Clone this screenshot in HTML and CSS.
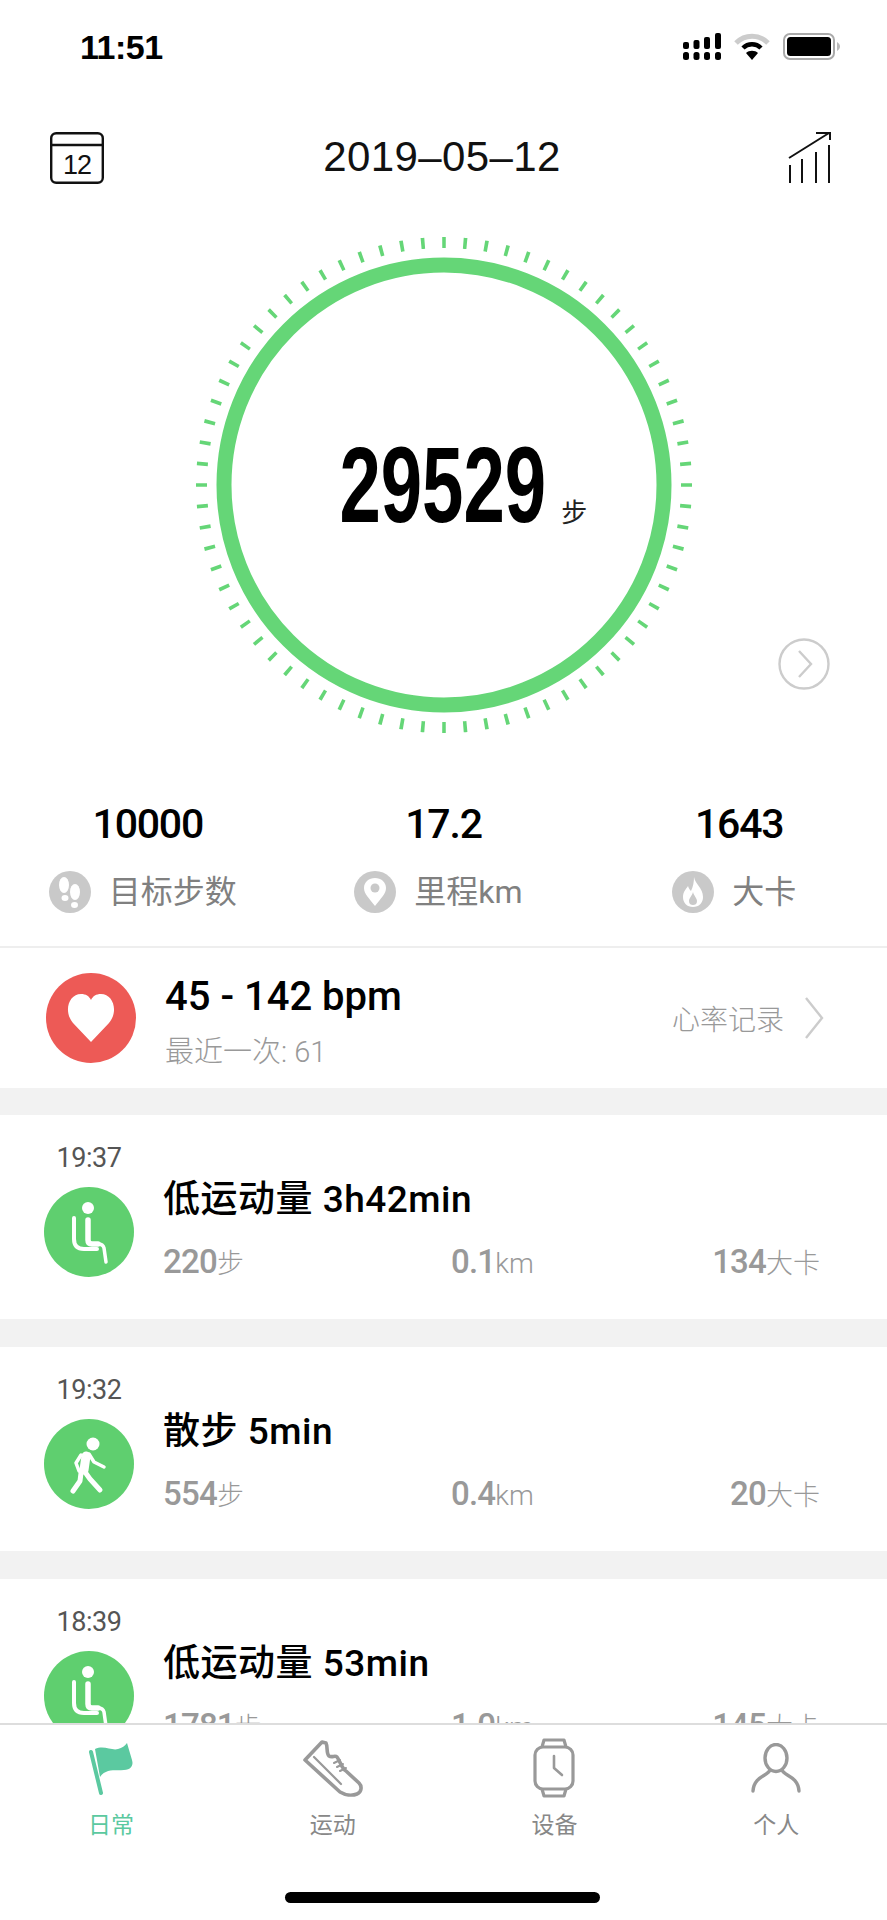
FILE: index.html
```html
<!DOCTYPE html>
<html lang="zh-CN">
<head>
    <meta charset="UTF-8">
    <meta name="viewport" content="width=device-width, initial-scale=1.0">
    <title>日常</title>
    <link rel="stylesheet" href="styles.css">
</head>
<body>
    <div class="phone">
        <div class="statusbar">
            <span class="clock">11:51</span>
            <div class="status-icons">
                <svg class="ic-signal" width="38" height="27" viewBox="0 0 38 27">
                    <g fill="#000">
                        <rect x="0" y="9" width="6" height="7" rx="2"/><rect x="0" y="19" width="6" height="8" rx="2.5"/>
                        <rect x="10.5" y="7" width="6" height="9" rx="2"/><rect x="10.5" y="19" width="6" height="8" rx="2.5"/>
                        <rect x="21" y="4" width="6" height="12" rx="2"/><rect x="21" y="19" width="6" height="8" rx="2.5"/>
                        <rect x="32" y="0" width="6" height="16" rx="2"/><rect x="32" y="19" width="6" height="8" rx="2.5"/>
                    </g>
                </svg>
                <svg class="ic-wifi" width="36" height="27" viewBox="0 0 36 27">
                    <path d="M2 10 C11 1 25 1 34 10" fill="none" stroke="#ccc" stroke-width="5"/>
                    <path d="M9 15 C14 10 22 10 27 15" fill="none" stroke="#000" stroke-width="4.5"/>
                    <path d="M18 27 L12 20 C15 17 21 17 24 20 Z" fill="#000"/>
                </svg>
                <svg class="ic-battery" width="57" height="27" viewBox="0 0 57 27">
                    <rect x="1" y="1" width="50" height="25" rx="6" fill="none" stroke="#aaa" stroke-width="2"/>
                    <rect x="4" y="4" width="44" height="19" rx="3.5" fill="#000"/>
                    <path d="M54 9 C56 10 57 12 57 13.5 C57 15 56 17 54 18 Z" fill="#bbb"/>
                </svg>
            </div>
        </div>

        <div class="topbar">
            <svg width="54" height="52" viewBox="0 0 54 52">
                <rect x="1.2" y="1.2" width="51.6" height="49.6" rx="5" fill="none" stroke="#111" stroke-width="2.4"/>
                <path d="M1 13 H53" stroke="#111" stroke-width="2.4"/>
                <text x="27" y="42" text-anchor="middle" class="cal-day">12</text>
            </svg>
            <span class="date">2019–05–12</span>
            <svg width="44" height="54" viewBox="0 0 44 54">
                <path d="M2 34 V52 M14 28 V52 M28 21 V52 M41 14 V52" fill="none" stroke="#111" stroke-width="2"/>
                <path d="M1 27 L41 2 M28 2 H42 V9" fill="none" stroke="#111" stroke-width="2"/>
            </svg>
        </div>

        <div class="ring-area">
            <div class="ring">
                <svg class="ring-svg" width="500" height="500" viewBox="0 0 500 500">
                    <circle class="ring-ticks" cx="250" cy="250" r="242.5" pathLength="72" transform="rotate(-90 250 250)"/>
                    <circle class="ring-main" cx="250" cy="250" r="220"/>
                </svg>
                <div class="steps"><span class="steps-num">29529</span><span class="steps-unit">步</span></div>
            </div>
            <svg class="ring-next" width="52" height="52" viewBox="0 0 52 52">
                <circle cx="26" cy="26" r="24.5" fill="none" stroke="#ccc" stroke-width="2.4"/>
                <path d="M21 13 L33 26 L21 39" fill="none" stroke="#ccc" stroke-width="2.4"/>
            </svg>
        </div>

        <div class="stats">
            <div class="stat">
                <div class="stat-num">10000</div>
                <div class="stat-label">
                    <svg width="42" height="42" viewBox="0 0 42 42">
                        <circle cx="21" cy="21" r="21" fill="#c9c9c9"/>
                        <g fill="#fff">
                            <ellipse cx="15" cy="14" rx="5" ry="8"/><ellipse cx="16" cy="27" rx="3.5" ry="3"/>
                            <ellipse cx="26" cy="21" rx="5" ry="8"/><ellipse cx="25.5" cy="34" rx="3.5" ry="3"/>
                        </g>
                    </svg>
                    <span>目标步数</span>
                </div>
            </div>
            <div class="stat">
                <div class="stat-num">17.2</div>
                <div class="stat-label">
                    <svg width="42" height="42" viewBox="0 0 42 42">
                        <circle cx="21" cy="21" r="21" fill="#c9c9c9"/>
                        <path d="M21 35 C15 27 10 23 10 17 C10 11 15 7 21 7 C27 7 32 11 32 17 C32 23 27 27 21 35 Z" fill="#fff"/>
                        <circle cx="21" cy="17" r="4.5" fill="#c9c9c9"/>
                    </svg>
                    <span>里程km</span>
                </div>
            </div>
            <div class="stat">
                <div class="stat-num">1643</div>
                <div class="stat-label">
                    <svg width="42" height="42" viewBox="0 0 42 42">
                        <circle cx="21" cy="21" r="21" fill="#c9c9c9"/>
                        <path d="M22 6 C23 13 31 17 31 26 C31 32 27 36 21 36 C15 36 11 32 11 26 C11 21 14 18 16 15 C17 18 18 19 19 20 C21 16 22 11 22 6 Z" fill="#fff"/>
                        <path d="M21 21 C22 25 25 27 25 30 C25 33 23 34 21 34 C19 34 17 33 17 30 C17 27 20 25 21 21 Z" fill="#c9c9c9"/>
                    </svg>
                    <span>大卡</span>
                </div>
            </div>
        </div>

        <div class="feed">
            <div class="heart-row">
                <div class="heart-badge">
                    <svg width="48" height="48" viewBox="0 0 48 48">
                        <path d="M24 48 L6 29 C-4 17 2 0 14 0 C19 0 22 2 24 6 C26 2 29 0 34 0 C46 0 52 17 42 29 Z" fill="#fff"/>
                    </svg>
                </div>
                <div class="heart-body">
                    <div class="heart-range">45 - 142 bpm</div>
                    <div class="heart-last">最近一次: 61</div>
                </div>
                <div class="heart-link">
                    <span>心率记录</span>
                    <svg width="20" height="42" viewBox="0 0 20 42">
                        <path d="M2 1 L18 21 L2 41" fill="none" stroke="#ccc" stroke-width="2.4"/>
                    </svg>
                </div>
            </div>

            <div class="card">
                <div class="card-left">
                    <div class="card-time">19:37</div>
                    <div class="card-badge">
                        <svg width="90" height="90" viewBox="0 0 90 90">
                            <use href="#sit"/>
                        </svg>
                    </div>
                </div>
                <div class="card-body">
                    <div class="card-title">低运动量 3h42min</div>
                    <div class="card-stats">
                        <span><b>220</b><i>步</i></span>
                        <span><b>0.1</b><em>km</em></span>
                        <span class="last"><b>134</b><i>大卡</i></span>
                    </div>
                </div>
            </div>

            <div class="card">
                <div class="card-left">
                    <div class="card-time">19:32</div>
                    <div class="card-badge">
                        <svg width="90" height="90" viewBox="0 0 90 90">
                            <g fill="none" stroke="#fff" stroke-linecap="round" stroke-linejoin="round">
                                <path d="M42 37 L40 51" stroke-width="9"/>
                                <path d="M45 35 L50 43 L60 48" stroke-width="3.5"/>
                                <path d="M37 36 L32 44 L35 52" stroke-width="3.5"/>
                                <path d="M41 53 L46 60 L56 71" stroke-width="5"/>
                                <path d="M37 54 L36 62 L29 72" stroke-width="5"/>
                            </g>
                            <circle cx="49" cy="25" r="6.5" fill="#fff"/>
                        </svg>
                    </div>
                </div>
                <div class="card-body">
                    <div class="card-title">散步 5min</div>
                    <div class="card-stats">
                        <span><b>554</b><i>步</i></span>
                        <span><b>0.4</b><em>km</em></span>
                        <span class="last"><b>20</b><i>大卡</i></span>
                    </div>
                </div>
            </div>

            <div class="card">
                <div class="card-left">
                    <div class="card-time">18:39</div>
                    <div class="card-badge">
                        <svg width="90" height="90" viewBox="0 0 90 90">
                            <use href="#sit"/>
                        </svg>
                    </div>
                </div>
                <div class="card-body">
                    <div class="card-title">低运动量 53min</div>
                    <div class="card-stats">
                        <span><b>1781</b><i>步</i></span>
                        <span><b>1.0</b><em>km</em></span>
                        <span class="last"><b>145</b><i>大卡</i></span>
                    </div>
                </div>
            </div>
        </div>

        <div class="tabbar">
            <div class="tab active">
                <div class="tab-icon">
                    <svg width="46" height="56" viewBox="0 0 46 56">
                        <path d="M7 9 C16 5 24 11 30 9 C34 8 37 6 39 3 L44 20 C46 26 42 30 36 30 C28 31 18 28 12 37 Z" fill="#5bc9a0"/>
                        <path d="M3 12 L13 53" fill="none" stroke="#5bc9a0" stroke-width="4" stroke-linecap="round"/>
                    </svg>
                </div>
                <span>日常</span>
            </div>
            <div class="tab">
                <div class="tab-icon">
                    <svg width="62" height="58" viewBox="0 0 62 58">
                        <g fill="none" stroke="#999" stroke-linejoin="round" stroke-linecap="round">
                            <path d="M20 3 L24 4 C26 8 24 14 27 17 C30 19 33 16 35 18 C38 22 40 30 44 32 L57 44 C60 47 60 53 55 55 C50 57 43 56 38 53 L3 21 Z" stroke-width="3.6"/>
                            <path d="M12 18 L39 45" stroke-width="2.2"/>
                            <path d="M32 24 L38 21 M35 28 L41 25 M38 32 L44 29" stroke-width="2"/>
                        </g>
                    </svg>
                </div>
                <span>运动</span>
            </div>
            <div class="tab">
                <div class="tab-icon">
                    <svg width="42" height="60" viewBox="0 0 42 60">
                        <g fill="none" stroke="#999" stroke-width="3.2" stroke-linejoin="round">
                            <rect x="2" y="9" width="38" height="42" rx="8"/>
                            <path d="M9 9 L11 2 H31 L33 9 M9 51 L11 58 H31 L33 51"/>
                            <path d="M21 18 V30 L29 37" stroke-width="2.6" stroke-linecap="round"/>
                        </g>
                    </svg>
                </div>
                <span>设备</span>
            </div>
            <div class="tab">
                <div class="tab-icon">
                    <svg width="50" height="50" viewBox="0 0 50 50">
                        <g fill="none" stroke="#999" stroke-width="3.4" stroke-linecap="round">
                            <ellipse cx="25" cy="15" rx="11" ry="13.5"/>
                            <path d="M19 27 C17 33 3 33 2 48 M31 27 C33 33 47 33 48 48"/>
                        </g>
                    </svg>
                </div>
                <span>个人</span>
            </div>
        </div>
        <div class="home-bar"></div>
    </div>

    <!-- shared icon -->
    <svg class="defs" width="0" height="0">
        <defs>
            <g id="sit">
                <circle cx="44" cy="21" r="6" fill="#fff"/>
                <g fill="none" stroke="#fff" stroke-linecap="round" stroke-linejoin="round">
                    <path d="M44 33 V53 Q44 57 48 57 H54" stroke-width="5.5"/>
                    <path d="M54 57 Q59 57 60 61 L62 75" stroke-width="3.5"/>
                    <path d="M30 31 V52 Q30 62 40 62 H53" stroke-width="4"/>
                </g>
            </g>
        </defs>
    </svg>
</body>
</html>
```

FILE: styles.css
```css
body {
    margin: 0;
    background-color: #fff;
    font-family: Roboto, "Noto Sans CJK SC", sans-serif;
}

.phone {
    position: relative;
    display: flex;
    flex-direction: column;
    width: 887px;
    height: 1920px;
    overflow: hidden;
}

.defs {
    position: absolute;
}

/* status bar */
.statusbar {
    display: flex;
    justify-content: space-between;
    flex: none;
    height: 95px;
    padding: 33px 47px 0 80px;
    box-sizing: border-box;
}

.clock {
    font-family: "Liberation Sans", sans-serif;
    font-weight: 700;
    font-size: 34px;
    line-height: 28px;
    letter-spacing: -0.5px;
    color: #000;
}

.status-icons {
    display: flex;
    gap: 13px;
    height: 27px;
}

/* top bar */
.topbar {
    display: flex;
    justify-content: space-between;
    align-items: center;
    flex: none;
    height: 125px;
    padding: 0 55px 0 50px;
    box-sizing: border-box;
}

.date {
    font-family: "Liberation Sans", sans-serif;
    font-size: 42px;
    letter-spacing: 0.4px;
    line-height: 46px;
    margin: -2px 0 0 -8px;
    color: #111;
}

.cal-day {
    font-family: "Liberation Sans", sans-serif;
    font-size: 27px;
    letter-spacing: -1px;
    fill: #111;
}

/* step ring */
.ring-area {
    position: relative;
    flex: none;
    height: 580px;
    padding-top: 15px;
    box-sizing: border-box;
}

.ring {
    position: relative;
    display: flex;
    align-items: center;
    justify-content: center;
    width: 500px;
    height: 500px;
    margin: 0 auto;
}

.ring-svg {
    position: absolute;
    left: 0;
    top: 0;
}

.ring-ticks {
    fill: none;
    stroke: #65d677;
    stroke-width: 11;
    stroke-dasharray: 0.17 0.83;
    stroke-dashoffset: 0.085;
}

.ring-main {
    fill: none;
    stroke: #65d677;
    stroke-width: 15;
}

.steps {
    position: relative;
    display: flex;
    align-items: baseline;
    margin-left: 39px;
}

.steps-num {
    font-family: "Liberation Sans", sans-serif;
    font-weight: 700;
    font-size: 107px;
    line-height: 120px;
    margin: 0 -45px;
    color: #000;
    transform: scaleX(0.695);
}

.steps-unit {
    font-family: "Noto Sans CJK SC", sans-serif;
    font-size: 26px;
    color: #222;
    margin-left: 15px;
}

.ring-next {
    position: absolute;
    left: 778px;
    top: 418px;
}

/* three totals */
.stats {
    display: grid;
    grid-template-columns: repeat(3, 1fr);
    flex: none;
    height: 146px;
}

.stat {
    text-align: center;
}

.stat-num {
    font-weight: 500;
    font-size: 41px;
    line-height: 48px;
    letter-spacing: -1.2px;
    color: #000;
}

.stat-label {
    display: flex;
    justify-content: center;
    align-items: center;
    gap: 18px;
    margin-top: 23px;
    padding-right: 10px;
    font-size: 32px;
    line-height: 42px;
    color: #808080;
}

/* feed */
.feed {
    flex: 1;
    min-height: 0;
    overflow: hidden;
    border-top: 2px solid #eee;
}

.heart-row {
    display: flex;
    align-items: center;
    height: 140px;
    padding: 0 63px 0 46px;
    border-bottom: 27px solid #f2f2f2;
}

.heart-badge,
.card-badge {
    display: flex;
    align-items: center;
    justify-content: center;
    width: 90px;
    height: 90px;
    border-radius: 50%;
}

.heart-badge {
    flex: none;
    background-color: #ed5a56;
}

.heart-body {
    flex: 1;
    margin-left: 29px;
    padding-top: 6px;
}

.heart-range {
    font-weight: 500;
    font-size: 40px;
    line-height: 48px;
    color: #000;
}

.heart-last {
    margin-top: 13px;
    font-size: 29px;
    line-height: 36px;
    font-weight: 300;
    color: #999;
}

.heart-link {
    display: flex;
    align-items: center;
    gap: 20px;
    font-size: 28px;
    font-weight: 300;
    color: #999;
}

.card {
    display: flex;
    height: 204px;
    padding-left: 44px;
    border-bottom: 28px solid #f2f2f2;
}

.card-left {
    flex: none;
    width: 90px;
    padding-top: 29px;
}

.card-time {
    height: 43px;
    font-size: 27px;
    line-height: 28px;
    letter-spacing: -0.4px;
    text-align: center;
    color: #555;
}

.card-badge {
    background-color: #5fcf6f;
}

.card-body {
    flex: 1;
    padding: 63px 67px 0 29px;
}

.card-title {
    font-weight: 500;
    font-size: 37px;
    line-height: 44px;
    letter-spacing: 0.5px;
    color: #000;
}

.card-stats {
    display: grid;
    grid-template-columns: 288px 1fr auto;
    margin-top: 20px;
    font-size: 33px;
    line-height: 40px;
    color: #999;
}

.card-stats b {
    font-weight: 500;
    letter-spacing: -0.8px;
}

.card-stats i {
    font-style: normal;
    font-size: 27px;
    font-weight: 300;
}

.card-stats em {
    font-style: normal;
    font-size: 28px;
    font-weight: 300;
}

/* tab bar */
.tabbar {
    display: grid;
    grid-template-columns: repeat(4, 1fr);
    flex: none;
    height: 197px;
    padding-top: 12px;
    box-sizing: border-box;
    border-top: 2px solid #ddd;
    background-color: #fff;
}

.tab {
    display: flex;
    flex-direction: column;
    align-items: center;
    font-size: 23px;
    color: #888;
}

.tab-icon {
    display: flex;
    align-items: center;
    justify-content: center;
    height: 62px;
    margin-bottom: 7px;
}

.tab.active {
    color: #5bc9a0;
}

.home-bar {
    position: absolute;
    left: 285px;
    top: 1892px;
    width: 315px;
    height: 11px;
    border-radius: 6px;
    background-color: #000;
}
```
